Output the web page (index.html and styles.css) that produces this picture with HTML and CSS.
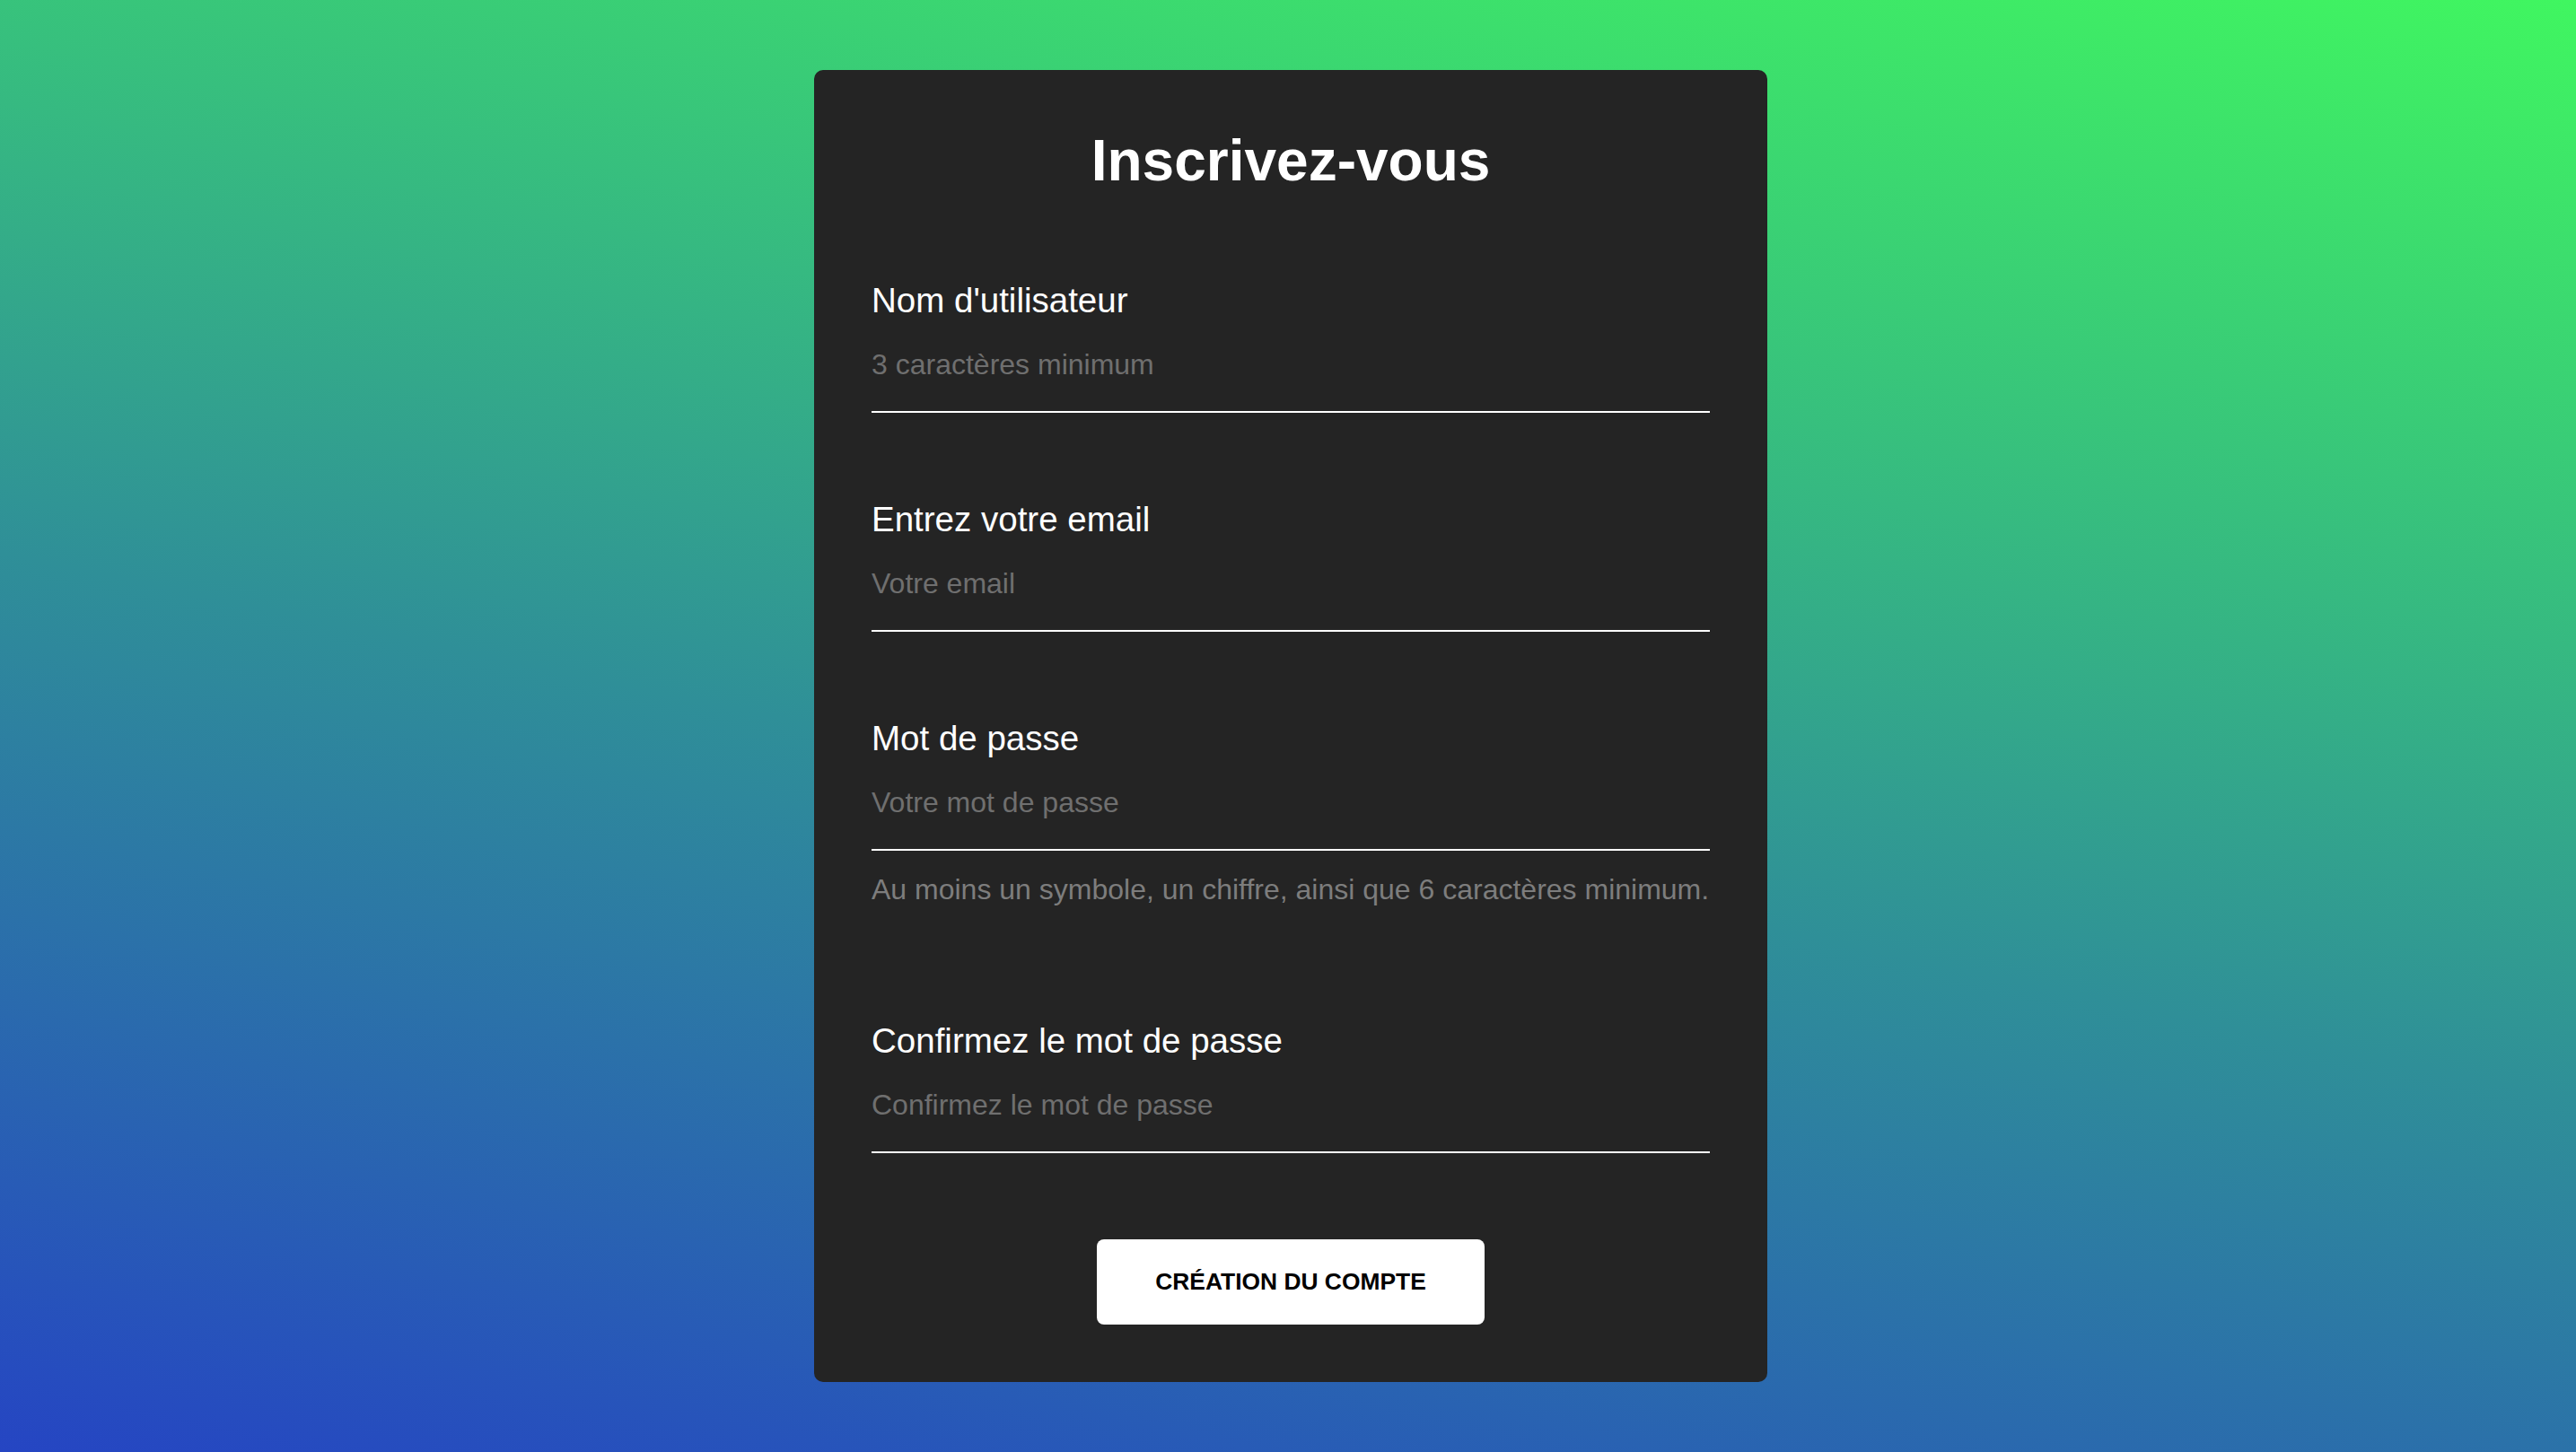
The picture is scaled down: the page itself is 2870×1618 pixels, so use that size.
FILE: index.html
```html
<!DOCTYPE html>
<html lang="fr">
<head>
<meta charset="utf-8">
<title>Inscrivez-vous</title>
<link rel="stylesheet" href="styles.css">
</head>
<body>
<main class="page">
  <form class="card" onsubmit="return false;">
    <h1 class="title">Inscrivez-vous</h1>

    <div class="field">
      <label class="label" for="username">Nom d'utilisateur</label>
      <input class="input" id="username" type="text" placeholder="3 caractères minimum">
    </div>

    <div class="field">
      <label class="label" for="email">Entrez votre email</label>
      <input class="input" id="email" type="email" placeholder="Votre email">
    </div>

    <div class="field">
      <label class="label" for="password">Mot de passe</label>
      <input class="input" id="password" type="password" placeholder="Votre mot de passe">
      <p class="hint">Au moins un symbole, un chiffre, ainsi que 6 caractères minimum.</p>
    </div>

    <div class="field field-after-hint">
      <label class="label" for="confirm">Confirmez le mot de passe</label>
      <input class="input" id="confirm" type="password" placeholder="Confirmez le mot de passe">
    </div>

    <div class="actions">
      <button class="button" type="submit">CRÉATION DU COMPTE</button>
    </div>
  </form>
</main>
</body>
</html>
```

FILE: styles.css
```css
* {
  box-sizing: border-box;
}

html,
body {
  margin: 0;
  padding: 0;
  height: 100%;
}

body {
  font-family: "Liberation Sans", Arial, Helvetica, sans-serif;
  color: #ffffff;
}

.page {
  min-height: 100vh;
  padding: 78px 0 0 6px;
  display: flex;
  justify-content: center;
  align-items: flex-start;
  background: linear-gradient(12deg, #2545c3 0%, #2f8f98 45%, #40f660 100%);
}

.card {
  width: 1062px;
  height: 1462px;
  background: #242424;
  border-radius: 10px;
  padding: 65px 64px 64px;
  display: flex;
  flex-direction: column;
}

.title {
  margin: 0 0 98px;
  font-size: 64px;
  line-height: 72px;
  font-weight: 700;
  text-align: center;
  color: #ffffff;
}

.field {
  display: flex;
  flex-direction: column;
  margin-bottom: 97px;
}

.field-after-hint {
  margin-top: 31px;
}

.label {
  display: block;
  font-size: 38.5px;
  line-height: 44px;
  font-weight: 400;
  color: #ffffff;
  margin-bottom: 30px;
}

.input {
  display: block;
  width: 100%;
  height: 73px;
  padding: 0 0 33px 0;
  margin: 0;
  border: none;
  border-bottom: 2px solid #ffffff;
  background: transparent;
  outline: none;
  font-family: inherit;
  font-size: 32px;
  line-height: 38px;
  color: #ffffff;
}

.input::placeholder {
  color: #6f6f6f;
  opacity: 1;
}

.hint {
  margin: 24px 0 0;
  font-size: 32px;
  line-height: 38px;
  color: #7d7d7d;
  white-space: nowrap;
}

.field:last-of-type {
  margin-bottom: 0;
}

.actions {
  display: flex;
  justify-content: center;
  margin-top: -1px;
}

.button {
  width: 432px;
  height: 95px;
  border: none;
  border-radius: 8px;
  background: #ffffff;
  color: #000000;
  font-family: inherit;
  font-size: 26.4px;
  font-weight: 700;
  cursor: pointer;
  padding: 0;
}
```
